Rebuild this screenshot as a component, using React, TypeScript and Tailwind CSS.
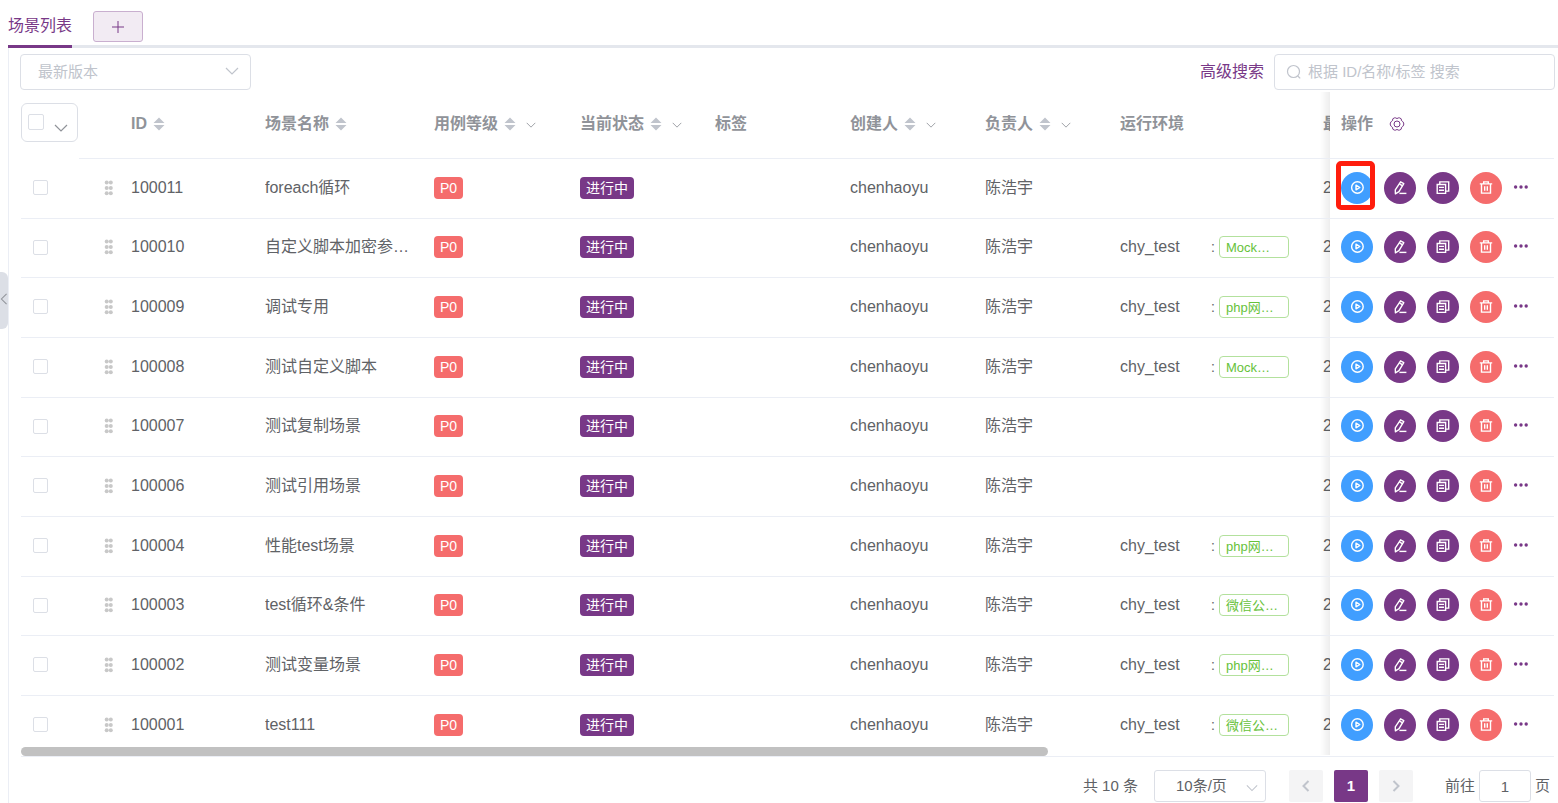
import type { ReactNode } from "react";

type Row = { id: string; name: string; env?: string };

const rows: Row[] = [
  { id: "100011", name: "foreach循环" },
  { id: "100010", name: "自定义脚本加密参…", env: "Mock…" },
  { id: "100009", name: "调试专用", env: "php网…" },
  { id: "100008", name: "测试自定义脚本", env: "Mock…" },
  { id: "100007", name: "测试复制场景" },
  { id: "100006", name: "测试引用场景" },
  { id: "100004", name: "性能test场景", env: "php网…" },
  { id: "100003", name: "test循环&条件", env: "微信公…" },
  { id: "100002", name: "测试变量场景", env: "php网…" },
  { id: "100001", name: "test111", env: "微信公…" },
];

function Chevron({ className, d = "M1 4l6 6 6-6" }: { className: string; d?: string }) {
  return (
    <svg viewBox="0 0 14 14" fill="none" stroke="currentColor" className={className} aria-hidden="true">
      <path d={d} strokeWidth="1.2" />
    </svg>
  );
}

function SortCaret() {
  return (
    <svg viewBox="0 0 12 14" className="h-3.5 w-3 shrink-0 fill-[#c0c4cc]" aria-hidden="true">
      <path d="M6 0.5L11.5 6H0.5zM6 13.5L0.5 8H11.5z" />
    </svg>
  );
}

function Glyph({ children }: { children: ReactNode }) {
  return (
    <svg
      viewBox="0 0 16 16"
      className="size-4"
      fill="none"
      stroke="currentColor"
      strokeWidth="1.4"
      aria-hidden="true"
    >
      {children}
    </svg>
  );
}

const actions = [
  {
    label: "执行",
    color: "bg-[#409eff]",
    icon: (
      <Glyph>
        <circle cx="8.4" cy="7.5" r="5.8" />
        <path d="M7 5.2v4.6l3.8-2.3z" strokeLinejoin="round" />
      </Glyph>
    ),
  },
  {
    label: "编辑",
    color: "bg-[#783887]",
    icon: (
      <Glyph>
        <path d="M8.6 1.8l3.2 1.8-4.8 8.1-3.6 2.1-.1-4z" strokeLinejoin="round" />
        <path d="M7.4 3.9l3.2 1.9" />
        <path d="M7.4 13.4h7" />
      </Glyph>
    ),
  },
  {
    label: "复制",
    color: "bg-[#783887]",
    icon: (
      <Glyph>
        <path d="M2.2 4.5h8.4v8.9H2.2z" />
        <path d="M4.8 4.2V1.9h8.9v9.2h-2.8" />
        <path d="M4 7.4h5M4 10.2h5" />
      </Glyph>
    ),
  },
  {
    label: "删除",
    color: "bg-[#f56c6c]",
    icon: (
      <Glyph>
        <path d="M1.8 3.9h12.4M5.7 3.7V1.9h4.6v1.8" />
        <path d="M3.5 4v9.1h9V4" />
        <path d="M6.7 6.2v4.6M9.3 6.2v4.6" />
      </Glyph>
    ),
  },
];

const box =
  "block shrink-0 appearance-none rounded-xs border border-[#dcdfe6] bg-white checked:border-[#783887] checked:bg-[#783887]";

const edge =
  "before:absolute before:inset-y-0 before:-left-2.5 before:w-2.5 before:bg-linear-to-l before:from-black/7 before:to-transparent";

function HeadCell({ label, sort, filter }: { label: string; sort?: boolean; filter?: boolean }) {
  return (
    <th className="border-b border-[#ebeef5] pb-0.5 pl-[11px] text-left font-bold">
      <div className="flex items-center gap-1.5">
        <span>{label}</span>
        {sort && <SortCaret />}
        {filter && <Chevron className="mt-0.5 ml-1 size-2.5 shrink-0" />}
      </div>
    </th>
  );
}

function SceneRow({ row, marked }: { row: Row; marked: boolean }) {
  const cell = "pl-[11px]";
  return (
    <tr className="h-15 *:border-b *:border-[#ebeef5] *:pb-0.5 last:*:border-transparent [&:nth-child(3n+2)]:h-[59px]">
      <td className="pl-3">
        <input type="checkbox" aria-label={`选择 ${row.id}`} className={`${box} size-[15px]`} />
      </td>
      <td className="pl-2">
        <svg viewBox="0 0 10 16" className="h-4 w-2.5 fill-[#c8c8c8]" aria-hidden="true">
          {[2.6, 8, 13.2].map((y) => (
            <g key={y}>
              <circle cx="2.7" cy={y} r="2" />
              <circle cx="6.8" cy={y} r="2" />
            </g>
          ))}
        </svg>
      </td>
      <td className={cell}>{row.id}</td>
      <td className={cell}>
        <div className="w-[150px] truncate">{row.name}</div>
      </td>
      <td className={cell}>
        <span className="inline-flex h-[22px] items-center rounded-sm bg-[#f56c6c] px-1.5 text-sm text-white">P0</span>
      </td>
      <td className={cell}>
        <span className="inline-flex h-[22px] items-center rounded-sm bg-[#783887] px-1.5 text-sm text-white">
          进行中
        </span>
      </td>
      <td className={cell} />
      <td className={cell}>chenhaoyu</td>
      <td className={cell}>陈浩宇</td>
      <td className={cell}>
        {row.env && (
          <div className="flex items-center">
            <span className="w-[91px]">chy_test</span>
            <span className="w-2 text-sm">:</span>
            <span className="h-[22px] w-[70px] truncate rounded-sm border border-[#b3e19d] px-1.5 text-[13px] leading-[22px] text-[#67c23a]">
              {row.env}
            </span>
          </div>
        )}
      </td>
      <td className={cell}>2</td>
      <td className={`sticky right-0 bg-white pl-[11px] ${edge}`}>
        <div className="flex items-center gap-[11px]">
          {actions.map((a, i) => (
            <div key={a.label} className="relative">
              <button
                type="button"
                aria-label={a.label}
                className={`flex size-8 items-center justify-center rounded-full text-white ${a.color}`}
              >
                {a.icon}
              </button>
              {marked && i === 0 && (
                <div className="pointer-events-none absolute -top-[11px] -left-[5px] h-[49px] w-[39px] rounded-[5px] border-5 border-[#ff1d0d]" />
              )}
            </div>
          ))}
          <button type="button" aria-label="更多" className="pb-0.5 text-[#783887]">
            <svg viewBox="0 0 16 16" className="size-4 fill-current" aria-hidden="true">
              <circle cx="2.6" cy="8" r="1.7" />
              <circle cx="8" cy="8" r="1.7" />
              <circle cx="13.2" cy="8" r="1.7" />
            </svg>
          </button>
        </div>
      </td>
    </tr>
  );
}

export default function App() {
  return (
    <div className="relative min-h-screen overflow-hidden bg-white pl-2 font-['Liberation_Sans','Noto_Sans_CJK_SC',sans-serif] text-base leading-6 text-[#606266]">
      <button
        type="button"
        aria-label="收起侧栏"
        className="absolute top-[272px] left-0 flex h-[57px] w-2 items-center justify-center rounded-r-md bg-[#dcdfe6] pb-1 text-[#909399]"
      >
        <Chevron className="h-3 w-3 shrink-0" d="M10 1L4 7l6 6" />
      </button>

      <nav className="flex h-12 items-stretch border-b-3 border-[#e4e7ed]">
        <a href="#scenes" className="-mb-[3px] flex items-center border-b-3 border-[#783887] pt-1.5 text-[#783887]">
          场景列表
        </a>
        <button
          type="button"
          aria-label="新增"
          className="mt-[11px] ml-[21px] flex h-[31px] w-[50px] items-center justify-center rounded-[3px] border border-[#c9afcf] bg-[#f2ebf3] text-[#783887]"
        >
          <svg viewBox="0 0 12 12" className="size-3 stroke-current" aria-hidden="true">
            <path d="M6 0v12M0 6h12" />
          </svg>
        </button>
      </nav>

      <main className="min-h-[755px] border-l border-[#ebeef5] pt-1.5 pr-1 pl-3">
        <div className="flex h-[38px] items-start justify-between">
          <div className="relative -ml-px">
            <select
              aria-label="版本"
              className="h-9 w-[231px] appearance-none rounded border border-[#dcdfe6] bg-white pl-[17px] text-[15px] text-[#c0c4cc]"
            >
              <option>最新版本</option>
            </select>
            <Chevron className="pointer-events-none absolute top-2.5 right-3 size-3.5 text-[#c0c4cc]" />
          </div>
          <div className="flex items-center gap-2.5">
            <a href="#advanced" className="text-[#783887]">
              高级搜索
            </a>
            <div className="relative -mr-px">
              <svg
                viewBox="0 0 16 16"
                fill="none"
                className="pointer-events-none absolute top-2.5 left-3 size-4 stroke-[#c0c4cc]"
                aria-hidden="true"
              >
                <circle cx="7.5" cy="7.5" r="6" strokeWidth="1.2" />
                <path d="M11.8 12l2.4 2.4" strokeWidth="1.2" />
              </svg>
              <input
                type="search"
                aria-label="搜索"
                placeholder="根据 ID/名称/标签 搜索"
                className="block h-9 w-[281px] rounded border border-[#dcdfe6] pb-0.5 pl-[33px] text-[15px] placeholder:text-[#c0c4cc]"
              />
            </div>
          </div>
        </div>

        <div className="relative border-b border-[#ebeef5]">
          <div className="overflow-x-auto overflow-y-hidden [scrollbar-width:none]">
            <table className="w-[2291px] table-fixed border-separate border-spacing-0">
              <colgroup>
                <col className="w-[75px]" />
                <col className="w-6" />
                <col className="w-[134px]" />
                <col className="w-[169px]" />
                <col className="w-[146px]" />
                <col className="w-[135px]" />
                <col className="w-[135px]" />
                <col className="w-[135px]" />
                <col className="w-[135px]" />
                <col className="w-[203px]" />
                <col />
                <col className="w-[224px]" />
              </colgroup>
              <thead className="text-[#909399]">
                <tr className="h-[67px]">
                  <th className="relative pb-1.5 after:absolute after:right-0 after:bottom-0 after:h-px after:w-[17px] after:bg-[#ebeef5]">
                    <div className="flex h-[39px] w-[57px] gap-2.5 rounded-md border border-[#dcdfe6] pt-2.5 pl-1.5">
                      <input type="checkbox" aria-label="全选" className={`${box} size-4`} />
                      <Chevron className="mt-[7px] size-3.5 shrink-0 text-[#909399]" />
                    </div>
                  </th>
                  <th className="border-b border-[#ebeef5]" />
                  <HeadCell label="ID" sort />
                  <HeadCell label="场景名称" sort />
                  <HeadCell label="用例等级" sort filter />
                  <HeadCell label="当前状态" sort filter />
                  <HeadCell label="标签" />
                  <HeadCell label="创建人" sort filter />
                  <HeadCell label="负责人" sort filter />
                  <HeadCell label="运行环境" />
                  <HeadCell label="最" />
                  <th className={`sticky right-0 border-b border-[#ebeef5] bg-white pb-0.5 pl-[11px] ${edge}`}>
                    <div className="flex items-center gap-4">
                      <span>操作</span>
                      <button type="button" aria-label="设置列" className="text-[#783887]">
                        <svg
                          viewBox="0 0 16 16"
                          className="size-4"
                          fill="none"
                          stroke="currentColor"
                          strokeLinejoin="round"
                          aria-hidden="true"
                        >
                          <path d="M5.3 1.9h1.5L8 2.6l1.2-.7h1.5l1.6 1v1.5l1.2.9 1.2 1.7v2l-1.2 1.7-1.2.9v1.5l-1.6 1H9.200L8 13.400l-1.200.7H5.300l-1.600-1v-1.500l-1.200-.9L1.300 9V7l1.200-1.700 1.200-.9V2.900z" />
                          <circle cx="8" cy="8" r="3" />
                        </svg>
                      </button>
                    </div>
                  </th>
                </tr>
              </thead>
              <tbody>
                {rows.map((row, i) => (
                  <SceneRow key={row.id} row={row} marked={i === 0} />
                ))}
              </tbody>
            </table>
          </div>
          <div className="absolute bottom-0 left-0 h-[9px] w-[67%] rounded-full bg-[#c1c1c1]" />
        </div>

        <footer className="flex items-center justify-end pt-[13px] text-[15px]">
          <span className="mr-4">共 10 条</span>
          <div className="relative mr-[23px]">
            <select
              aria-label="每页条数"
              className="block h-8 w-28 appearance-none rounded-[3px] border border-[#dcdfe6] bg-white pl-[21px] text-[15px]"
            >
              <option>10条/页</option>
            </select>
            <Chevron className="pointer-events-none absolute top-3 right-2 size-3 text-[#c0c4cc]" />
          </div>
          <div className="mr-8 flex gap-[11px]">
            <button
              type="button"
              aria-label="上一页"
              className="flex h-8 w-[34px] items-center justify-center rounded-xs bg-[#f4f4f5] text-[#c0c4cc]"
            >
              <svg viewBox="0 0 12 12" fill="none" className="size-3 stroke-current stroke-2" aria-hidden="true">
                <path d="M8.5 1L3.5 6l5 5" />
              </svg>
            </button>
            <button type="button" className="h-8 w-[34px] rounded-xs bg-[#783887] font-bold text-white">
              1
            </button>
            <button
              type="button"
              aria-label="下一页"
              className="flex h-8 w-[34px] items-center justify-center rounded-xs bg-[#f4f4f5] text-[#c0c4cc]"
            >
              <svg viewBox="0 0 12 12" fill="none" className="size-3 stroke-current stroke-2" aria-hidden="true">
                <path d="M3.5 1l5 5-5 5" />
              </svg>
            </button>
          </div>
          <label className="mr-1 flex items-center gap-1">
            前往
            <input
              type="text"
              defaultValue="1"
              className="block h-8 w-[52px] rounded-[3px] border border-[#dcdfe6] text-center"
            />
            页
          </label>
        </footer>
      </main>
    </div>
  );
}
